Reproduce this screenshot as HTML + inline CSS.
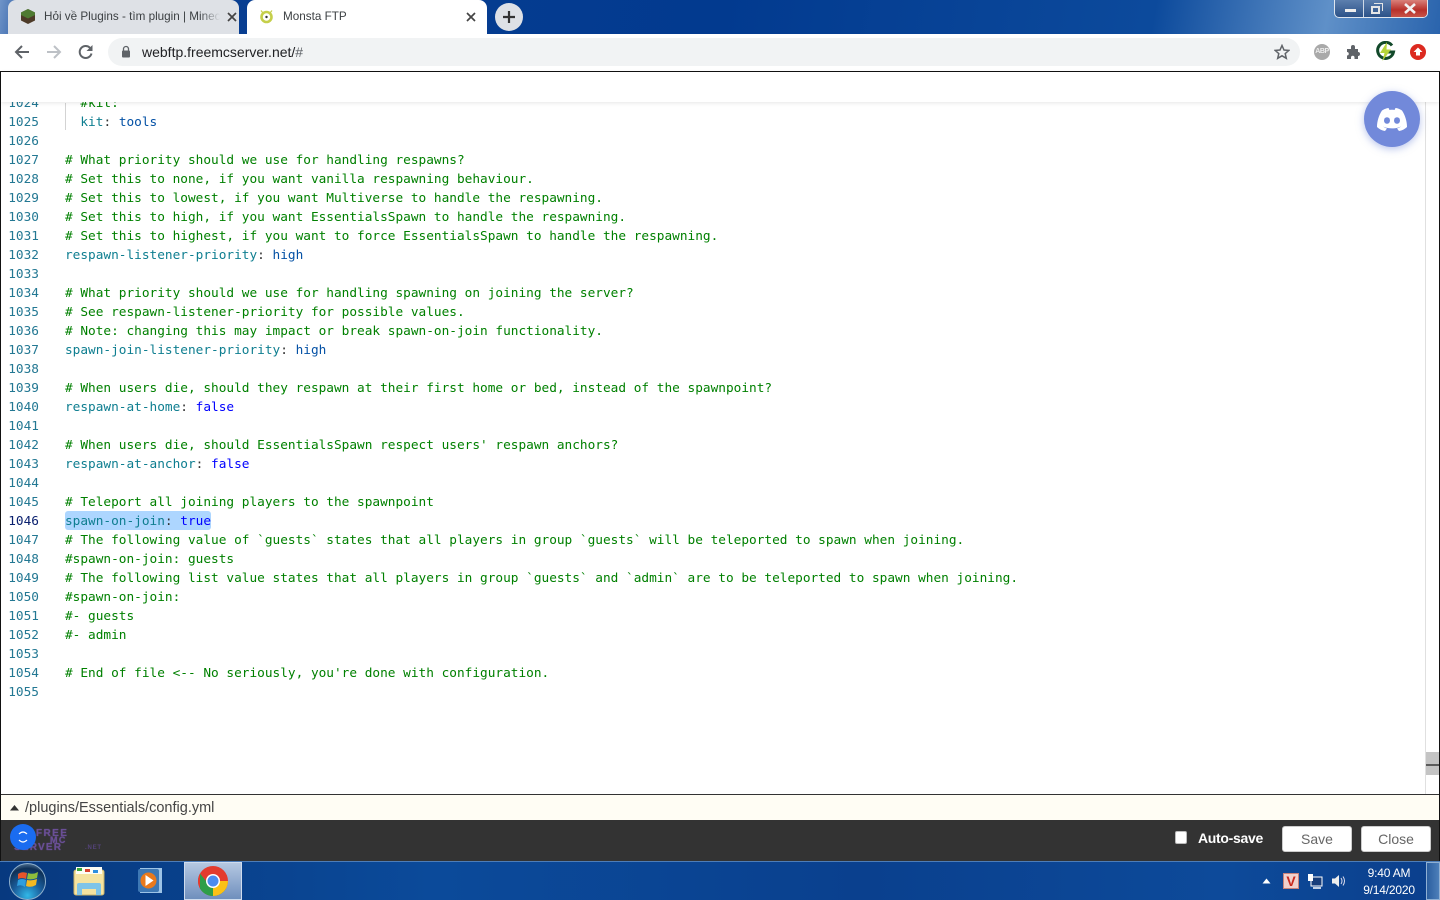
<!DOCTYPE html>
<html><head><meta charset="utf-8"><style>
*{box-sizing:border-box}
html,body{margin:0;padding:0;width:1440px;height:900px;overflow:hidden;background:#fff;font-family:"Liberation Sans",sans-serif}
.a{position:absolute}
#titlebar{left:0;top:0;width:1440px;height:34px;background:linear-gradient(100deg,#6f94c8 0,#0a3f92 3%,#023a8f 50%,#0c4a9c 80%,#5f90c8 92%,#2a64ad 100%)}
.tab{top:0;height:34px;border-radius:8px 8px 0 0;font-size:11.7px;color:#3c4043;line-height:34px}
#toolbar{left:0;top:34px;width:1440px;height:37px;background:#fff}
#url{left:108px;top:38px;width:1192px;height:28px;border-radius:14px;background:#f1f3f4;font-size:14px;line-height:28px;color:#202124;padding-left:34px}
#frame{left:0;top:71px;width:1440px;height:790px;border:1px solid #111;border-bottom:none;background:#fff}
#shadow{left:1px;top:72px;width:1438px;height:30px;background:#fff;box-shadow:0 1px 4px rgba(0,0,0,.1);z-index:3}
#code{left:0;top:94px;width:1425px;height:701px;overflow:hidden;font-family:"DejaVu Sans Mono","Liberation Mono",monospace;font-size:12.785px;line-height:19px;white-space:pre;z-index:1}
.l{position:absolute;left:0;height:19px}
.n{position:absolute;left:0;width:39px;text-align:right;color:#237893}
.t{position:absolute;left:65px}
.c{color:#008000}.k{color:#0e7e90}.v{color:#0451a5}.b{color:#0000ff}.p{color:#333}
#guide{left:65px;top:103px;width:1px;height:27px;background:#d3d3d3;z-index:2}
#sel{left:65px;top:511px;width:146px;height:19px;background:#add6ff;border-radius:3px;z-index:0}
#sb{left:1425px;top:102px;width:1px;height:692px;background:#e0e0e0;z-index:2}
#sbt{left:1426px;top:752px;width:13px;height:23px;background:#c4c4c4;z-index:2}
#sbl{left:1426px;top:764px;width:13px;height:2px;background:#5c5c5c;z-index:3}
#pathbar{left:1px;top:794px;width:1438px;height:27px;background:#fffdf4;border-top:1px solid #333;font-size:14.5px;line-height:27px;color:#444;padding-left:24px;z-index:3}
#bottom{left:1px;top:820px;width:1438px;height:41px;background:#333;z-index:3}
.btn{top:826px;height:26px;width:70px;background:#fff;border:1px solid #ccc;border-radius:3px;text-align:center;font-size:14px;line-height:24px;color:#666;z-index:4}
#taskbar{left:0;top:861px;width:1440px;height:39px;background:linear-gradient(90deg,#07397f 0,#0b4a9a 30%,#0a408e 60%,#0d4a9a 85%,#0b3f8c 100%);border-top:1px solid #4d7db8;z-index:5}
.clock{color:#fff;font-size:12px;text-align:center;z-index:6;letter-spacing:-.2px}
.logo{position:absolute;z-index:4;font-family:"Liberation Sans",sans-serif;font-weight:bold;color:#6a4f96;white-space:nowrap}
</style></head><body>

<div class="a" id="titlebar"></div>
<div class="a tab" style="left:8px;width:231px;background:#dee1e6;padding-left:36px;overflow:hidden"><span style="display:block;width:176px;overflow:hidden;white-space:nowrap">Hỏi về Plugins - tìm plugin | Minecraft</span></div>
<div class="a" style="left:200px;top:4px;width:20px;height:26px;background:linear-gradient(90deg,rgba(222,225,230,0),#dee1e6);z-index:2"></div>
<svg class="a" style="left:20px;top:8px;z-index:2" width="16" height="17" viewBox="0 0 16 17"><path d="M8 1L15 4.500V12.500L8 16L1 12.500V4.500Z" fill="#4d3a28"/><path d="M8 1L15 4.500V7L8 10.500L1 7V4.500Z" fill="#4f7a32"/></svg>
<svg class="a" style="left:227px;top:12px;z-index:2" width="10" height="10" viewBox="0 0 10 10"><path d="M1 1L9 9M9 1L1 9" stroke="#444" stroke-width="1.7"/></svg>
<div class="a tab" style="left:247px;width:240px;background:#fff;padding-left:36px">Monsta FTP</div>
<svg class="a" style="left:259px;top:9px;z-index:2" width="15" height="15" viewBox="0 0 15 15"><circle cx="7.500" cy="8" r="5" fill="#fff" stroke="#c5cf4a" stroke-width="2.600"/><circle cx="7.500" cy="8" r="1.200" fill="#333"/><path d="M2 1.500L4 4M13 1.500L11 4" stroke="#c5cf4a" stroke-width="1.200"/></svg>
<svg class="a" style="left:466px;top:12px;z-index:2" width="10" height="10" viewBox="0 0 10 10"><path d="M1 1L9 9M9 1L1 9" stroke="#444" stroke-width="1.7"/></svg>
<div class="a" style="left:495px;top:3px;width:28px;height:28px;border-radius:50%;background:#dee1e6"></div>
<svg class="a" style="left:502px;top:10px" width="14" height="14" viewBox="0 0 14 14"><path d="M7 1V13M1 7H13" stroke="#333" stroke-width="2.200"/></svg>

<div class="a" style="left:1334px;top:0;width:94px;height:18px;border:1px solid #dfe6ef;border-top:none;border-radius:0 0 5px 5px;overflow:hidden;background:linear-gradient(#5c7fae,#2c5288)">
<div class="a" style="left:28px;top:0;width:1px;height:18px;background:#cfd9e6"></div>
<div class="a" style="left:56px;top:0;width:1px;height:18px;background:#cfd9e6"></div>
<div class="a" style="left:56px;top:0;width:38px;height:18px;background:linear-gradient(#d9817a,#b8302a 55%,#c9584c)"></div>
<div class="a" style="left:10px;top:9px;width:11px;height:3px;background:#eee"></div>
<div class="a" style="left:36px;top:6px;width:9px;height:8px;border:2px solid #e6e6e6"></div>
<div class="a" style="left:39px;top:3px;width:9px;height:8px;border:1px solid #e6e6e6;border-bottom:none;border-left:none"></div>
<svg class="a" style="left:68px;top:3px" width="14" height="11" viewBox="0 0 14 11"><path d="M2 1L12 10M12 1L2 10" stroke="#f2f2f2" stroke-width="2.600"/></svg>
</div>

<div class="a" id="toolbar"></div>
<svg class="a" style="left:14px;top:44px" width="16" height="16" viewBox="0 0 16 16"><path d="M15 8H2M8 2L2 8L8 14" fill="none" stroke="#5f6368" stroke-width="2"/></svg>
<svg class="a" style="left:46px;top:44px" width="16" height="16" viewBox="0 0 16 16"><path d="M1 8H14M8 2L14 8L8 14" fill="none" stroke="#bdc1c6" stroke-width="2"/></svg>
<svg class="a" style="left:78px;top:44px" width="16" height="16" viewBox="0 0 16 16"><path d="M13.500 9.500A6 6 0 1 1 12 3.800" fill="none" stroke="#5f6368" stroke-width="2"/><path d="M14.500 1V7H8.500Z" fill="#5f6368"/></svg>
<div class="a" id="url">webftp.freemcserver.net/<span style="color:#5f6368">#</span></div>
<svg class="a" style="left:121px;top:45px" width="10" height="13" viewBox="0 0 10 13"><path d="M2.500 6V4A2.500 2.500 0 0 1 7.500 4V6" fill="none" stroke="#5f6368" stroke-width="1.300"/><rect x="1" y="5.500" width="8" height="7" rx="1" fill="#5f6368"/></svg>
<svg class="a" style="left:1274px;top:44px" width="16" height="16" viewBox="0 0 16 16"><path d="M8 1.500L10 6L14.800 6.400L11.200 9.600L12.300 14.300L8 11.800L3.700 14.300L4.800 9.600L1.200 6.400L6 6Z" fill="none" stroke="#5f6368" stroke-width="1.500"/></svg>
<div class="a" style="left:1314px;top:44px;width:16px;height:16px;border-radius:50%;background:#a9a9a9;color:#eee;font-size:7px;font-weight:bold;line-height:16px;text-align:center;letter-spacing:-.4px">ABP</div>
<svg class="a" style="left:1346px;top:44px" width="16" height="16" viewBox="0 0 16 16"><path d="M1 5H5V3A2 2 0 0 1 9 3V5H12V8A2 2 0 0 1 12 12V15H8.500V13.500A1.700 1.700 0 0 0 5 13.500V15H1V11.500A1.700 1.700 0 0 0 1 8Z" fill="#5f6368"/></svg>
<svg class="a" style="left:1375px;top:41px" width="21" height="21" viewBox="0 0 21 21"><path d="M17 4.500A8 8 0 1 0 18.500 11H13" fill="none" stroke="#12492a" stroke-width="3"/><path d="M12 1L5 12H9.500L7.500 20L16 8.500H11.500Z" fill="#b6d43a"/></svg>
<svg class="a" style="left:1410px;top:44px" width="16" height="16" viewBox="0 0 16 16"><circle cx="8" cy="8" r="8" fill="#dc2a20"/><path d="M8 3.500L12.500 8H10V11.500H6V8H3.500Z" fill="#fff"/></svg>

<div class="a" id="frame"></div>
<div class="a" id="shadow"></div>
<div class="a" id="sel"></div>
<div class="a" id="guide"></div>

<div class="a" id="code">
<div class="l" style="top:0"><span class="n">1024</span><span class="t c">  #kit:</span></div>
<div class="l" style="top:19px"><span class="n">1025</span><span class="t">  <span class="k">kit</span><span class="p">:</span> <span class="v">tools</span></span></div>
<div class="l" style="top:38px"><span class="n">1026</span></div>
<div class="l" style="top:57px"><span class="n">1027</span><span class="t c"># What priority should we use for handling respawns?</span></div>
<div class="l" style="top:76px"><span class="n">1028</span><span class="t c"># Set this to none, if you want vanilla respawning behaviour.</span></div>
<div class="l" style="top:95px"><span class="n">1029</span><span class="t c"># Set this to lowest, if you want Multiverse to handle the respawning.</span></div>
<div class="l" style="top:114px"><span class="n">1030</span><span class="t c"># Set this to high, if you want EssentialsSpawn to handle the respawning.</span></div>
<div class="l" style="top:133px"><span class="n">1031</span><span class="t c"># Set this to highest, if you want to force EssentialsSpawn to handle the respawning.</span></div>
<div class="l" style="top:152px"><span class="n">1032</span><span class="t"><span class="k">respawn-listener-priority</span><span class="p">:</span> <span class="v">high</span></span></div>
<div class="l" style="top:171px"><span class="n">1033</span></div>
<div class="l" style="top:190px"><span class="n">1034</span><span class="t c"># What priority should we use for handling spawning on joining the server?</span></div>
<div class="l" style="top:209px"><span class="n">1035</span><span class="t c"># See respawn-listener-priority for possible values.</span></div>
<div class="l" style="top:228px"><span class="n">1036</span><span class="t c"># Note: changing this may impact or break spawn-on-join functionality.</span></div>
<div class="l" style="top:247px"><span class="n">1037</span><span class="t"><span class="k">spawn-join-listener-priority</span><span class="p">:</span> <span class="v">high</span></span></div>
<div class="l" style="top:266px"><span class="n">1038</span></div>
<div class="l" style="top:285px"><span class="n">1039</span><span class="t c"># When users die, should they respawn at their first home or bed, instead of the spawnpoint?</span></div>
<div class="l" style="top:304px"><span class="n">1040</span><span class="t"><span class="k">respawn-at-home</span><span class="p">:</span> <span class="b">false</span></span></div>
<div class="l" style="top:323px"><span class="n">1041</span></div>
<div class="l" style="top:342px"><span class="n">1042</span><span class="t c"># When users die, should EssentialsSpawn respect users' respawn anchors?</span></div>
<div class="l" style="top:361px"><span class="n">1043</span><span class="t"><span class="k">respawn-at-anchor</span><span class="p">:</span> <span class="b">false</span></span></div>
<div class="l" style="top:380px"><span class="n">1044</span></div>
<div class="l" style="top:399px"><span class="n">1045</span><span class="t c"># Teleport all joining players to the spawnpoint</span></div>
<div class="l" style="top:418px"><span class="n" style="color:#0b216f">1046</span><span class="t"><span class="k">spawn-on-join</span><span class="p">:</span> <span class="b">true</span></span></div>
<div class="l" style="top:437px"><span class="n">1047</span><span class="t c"># The following value of `guests` states that all players in group `guests` will be teleported to spawn when joining.</span></div>
<div class="l" style="top:456px"><span class="n">1048</span><span class="t c">#spawn-on-join: guests</span></div>
<div class="l" style="top:475px"><span class="n">1049</span><span class="t c"># The following list value states that all players in group `guests` and `admin` are to be teleported to spawn when joining.</span></div>
<div class="l" style="top:494px"><span class="n">1050</span><span class="t c">#spawn-on-join:</span></div>
<div class="l" style="top:513px"><span class="n">1051</span><span class="t c">#- guests</span></div>
<div class="l" style="top:532px"><span class="n">1052</span><span class="t c">#- admin</span></div>
<div class="l" style="top:551px"><span class="n">1053</span></div>
<div class="l" style="top:570px"><span class="n">1054</span><span class="t c"># End of file &lt;-- No seriously, you're done with configuration.</span></div>
<div class="l" style="top:589px"><span class="n">1055</span></div>
</div>

<div class="a" id="sb"></div>
<div class="a" id="sbt"></div>
<div class="a" id="sbl"></div>

<div class="a" style="left:1364px;top:91px;width:56px;height:56px;border-radius:50%;background:#7289da;box-shadow:0 2px 8px rgba(114,137,218,.5);z-index:6"></div>
<svg class="a" style="left:1376px;top:107px;z-index:7" width="32" height="25" viewBox="0 0 32 25"><path d="M6 3.500C9 1.500 12 1 12.500 1L13.500 3C15 2.700 17 2.700 18.500 3L19.500 1C20.500 1 23 1.500 26 3.500C29 8 31 14 31 20C29 22 26 23.500 23 24L21 21.500C23 21 24 20 25 19.500C20 22 12 22 7 19.500C8 20 9 21 11 21.500L9 24C6 23.500 3 22 1 20C1 14 3 8 6 3.500Z" fill="#fff"/><ellipse cx="11" cy="13.500" rx="3" ry="3.300" fill="#7289da"/><ellipse cx="21" cy="13.500" rx="3" ry="3.300" fill="#7289da"/></svg>

<div class="a" id="pathbar">/plugins/Essentials/config.yml</div>
<svg class="a" style="left:10px;top:805px;z-index:4" width="9" height="6" viewBox="0 0 9 6"><path d="M4.500 0L9 5.500H0Z" fill="#333"/></svg>

<div class="a" id="bottom"></div>
<div class="logo" style="left:36px;top:829px;font-size:10px;line-height:10px;letter-spacing:1.400px;text-shadow:0 0 1px #6a4f96">FREE</div>
<div class="logo" style="left:50px;top:836px;font-size:9px;line-height:9px;letter-spacing:1.400px;text-shadow:0 0 1px #6a4f96">MC</div>
<div class="logo" style="left:14px;top:843px;font-size:10px;line-height:10px;letter-spacing:1.200px;text-shadow:0 0 1px #6a4f96">SERVER</div>
<div class="logo" style="left:85px;top:844px;font-size:6px;line-height:8px;letter-spacing:.8px;color:#54437a">.NET</div>
<div class="a" style="left:10px;top:824px;width:26px;height:26px;border-radius:50%;background:#1a6cf0;z-index:5"></div>
<svg class="a" style="left:17px;top:830px;z-index:6" width="12" height="14" viewBox="0 0 12 14"><path d="M2 4Q6 0 10 4M2 10Q6 14 10 10" fill="none" stroke="#fff" stroke-width="1.200"/></svg>
<div class="a" style="left:1175px;top:831px;width:12px;height:13px;background:#fff;border:1px solid #bbb;border-radius:2px;z-index:4"></div>
<div class="a" style="left:1198px;top:830px;font-size:14px;font-weight:bold;color:#fff;z-index:4;letter-spacing:-.3px">Auto-save</div>
<div class="a btn" style="left:1282px">Save</div>
<div class="a btn" style="left:1361px">Close</div>

<div class="a" id="taskbar"></div>
<div class="a" style="left:184px;top:862px;width:58px;height:38px;background:linear-gradient(#b5c8e2,#6f8fbd);border:1px solid #cfdcee;z-index:6"></div>
<div class="a" style="left:9px;top:863px;width:37px;height:37px;border-radius:50%;background:radial-gradient(circle at 50% 90%,#31b8e8 0,#1a5d9c 40%,#0e2f55 75%,#7fa4c4 100%);border:1px solid #8fb0cc;z-index:6"></div>
<svg class="a" style="left:17px;top:870px;z-index:7" width="22" height="20" viewBox="0 0 22 20"><path d="M1 4Q5 1 10 3L9 9Q5 7 1 9Z" fill="#e8552a"/><path d="M11 3Q16 5 21 2L20 8Q15 10 10 9Z" fill="#8ebe3c"/><path d="M1 10Q5 8 9 10L8 17Q4 14 0 16Z" fill="#2f9ede"/><path d="M10 10Q15 11 20 9L19 15Q14 18 9 16Z" fill="#f5b921"/></svg>
<svg class="a" style="left:73px;top:866px;z-index:7" width="32" height="30" viewBox="0 0 32 30"><rect x="1" y="4" width="30" height="25" rx="2" fill="#f5e3a0" stroke="#c9b36a"/><rect x="3" y="1" width="26" height="7" fill="#fdfdf5"/><rect x="4" y="2" width="5" height="3" fill="#3aa83a"/><rect x="12" y="3" width="5" height="3" fill="#d9432f"/><rect x="20" y="4" width="5" height="3" fill="#2f8fde"/><path d="M4 29V19Q4 17 6 17H26Q28 17 28 19V29H23V23H9V29Z" fill="#7fc4e8"/></svg>
<svg class="a" style="left:137px;top:867px;z-index:7" width="26" height="27" viewBox="0 0 26 27"><rect x="3" y="1" width="22" height="25" fill="#9cc3e6"/><rect x="1" y="2" width="21" height="23" rx="2" fill="#3e78b4"/><circle cx="11.500" cy="13.500" r="8" fill="#e9791c"/><path d="M8.500 8L16.500 13.500L8.500 19Z" fill="#fff"/></svg>
<svg class="a" style="left:198px;top:866px;z-index:7" width="30" height="30" viewBox="0 0 30 30"><circle cx="15" cy="15" r="15" fill="#e33b2e"/><path d="M15 15L28 22.500A15 15 0 0 1 15 30A15 15 0 0 1 2 22.500Z" fill="#2d9e48"/><path d="M15 15H30A15 15 0 0 1 15 30Z" fill="#fbc116"/><path d="M15 15L2 22.500A15 15 0 0 1 2 7.500Z" fill="#e33b2e"/><path d="M15 15L8 27.500A15 15 0 0 1 2 22.500L2 7.500L8 15Z" fill="#2d9e48"/><circle cx="15" cy="15" r="7" fill="#fff"/><circle cx="15" cy="15" r="5.500" fill="#4b8bf0"/></svg>

<svg class="a" style="left:1262px;top:878px;z-index:7" width="9" height="6" viewBox="0 0 9 6"><path d="M4.500 0.500L8.500 5.500H0.500Z" fill="#fff"/></svg>
<div class="a" style="left:1283px;top:873px;width:16px;height:16px;background:#f0d0cc;border:1px solid #c9827a;color:#c8281e;font-size:14px;font-weight:bold;line-height:14px;text-align:center;z-index:7">V</div>
<svg class="a" style="left:1307px;top:873px;z-index:7" width="16" height="16" viewBox="0 0 16 16"><rect x="4" y="4" width="11" height="9" fill="#173d7a" stroke="#fff"/><rect x="1" y="1" width="5" height="7" fill="#fff"/><path d="M6 15H14" stroke="#fff" stroke-width="1.500"/></svg>
<svg class="a" style="left:1331px;top:873px;z-index:7" width="16" height="16" viewBox="0 0 16 16"><path d="M1 5.500H4L8 2V14L4 10.500H1Z" fill="#eee"/><path d="M10 5Q12 8 10 11M12 3.500Q15 8 12 12.500" fill="none" stroke="#dde" stroke-width="1"/></svg>
<div class="a clock" style="left:1358px;top:866px;width:62px;line-height:15px">9:40 AM</div>
<div class="a clock" style="left:1358px;top:883px;width:62px;line-height:15px">9/14/2020</div>
<div class="a" style="left:1426px;top:862px;width:14px;height:38px;background:linear-gradient(90deg,#2b5e9f,#4d7fba);border:1px solid #8fb0d4;z-index:6"></div>
</body></html>
